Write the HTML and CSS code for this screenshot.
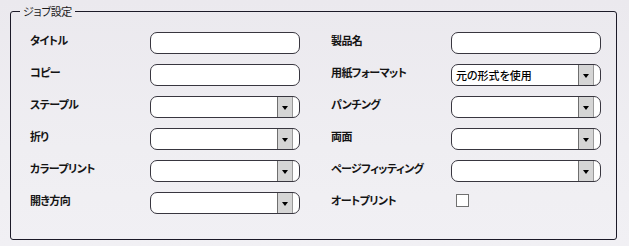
FILE: index.html
```html
<!DOCTYPE html>
<html lang="ja">
<head>
<meta charset="utf-8">
<title>ジョブ設定</title>
<link rel="stylesheet" href="styles.css">
</head>
<body>
<div class="page">
  <fieldset class="group">
    <legend class="group-title">ジョブ設定</legend>
    <div class="grid">
      <div class="field"><span class="label">タイトル</span><div class="input"></div></div>
      <div class="field"><span class="label">製品名</span><div class="input"></div></div>

      <div class="field"><span class="label">コピー</span><div class="input"></div></div>
      <div class="field"><span class="label">用紙フォーマット</span><div class="input select"><span class="value">元の形式を使用</span><span class="drop"><span class="arrow"></span></span></div></div>

      <div class="field"><span class="label">ステープル</span><div class="input select"><span class="value"></span><span class="drop"><span class="arrow"></span></span></div></div>
      <div class="field"><span class="label">パンチング</span><div class="input select"><span class="value"></span><span class="drop"><span class="arrow"></span></span></div></div>

      <div class="field"><span class="label">折り</span><div class="input select"><span class="value"></span><span class="drop"><span class="arrow"></span></span></div></div>
      <div class="field"><span class="label">両面</span><div class="input select"><span class="value"></span><span class="drop"><span class="arrow"></span></span></div></div>

      <div class="field"><span class="label">カラープリント</span><div class="input select"><span class="value"></span><span class="drop"><span class="arrow"></span></span></div></div>
      <div class="field"><span class="label">ページフィッティング</span><div class="input select"><span class="value"></span><span class="drop"><span class="arrow"></span></span></div></div>

      <div class="field"><span class="label">開き方向</span><div class="input select"><span class="value"></span><span class="drop"><span class="arrow"></span></span></div></div>
      <div class="field"><span class="label">オートプリント</span><div class="check-wrap"><span class="checkbox"></span></div></div>
    </div>
  </fieldset>
</div>
</body>
</html>
```

FILE: styles.css
```css
html, body {
  margin: 0;
  padding: 0;
}
body {
  width: 629px;
  height: 246px;
  background: linear-gradient(180deg, #ebe9ee 0%, #efeef2 60%, #f1f0f4 100%);
  font-family: "Noto Sans CJK JP", "Noto Sans", sans-serif;
  font-feature-settings: "palt";
  color: #141414;
  overflow: hidden;
}
.page {
  padding: 5px 0 0 10px;
}
.group {
  box-sizing: border-box;
  width: 607px;
  height: 235px;
  margin: 0;
  padding: 0;
  border: 1px solid #1c1a28;
  border-radius: 3px;
  min-width: 0;
}
.group-title {
  margin-left: 9px;
  padding: 0 3px;
  font-size: 11px;
  line-height: 13px;
  height: 13px;
  color: #1a1a1a;
  letter-spacing: -0.3px;
}
.grid {
  display: grid;
  grid-template-columns: 270px 270px;
  column-gap: 31px;
  row-gap: 10px;
  padding: 14px 0 0 19px;
}
.field {
  display: flex;
  align-items: flex-start;
  height: 22px;
}
.label {
  width: 120px;
  flex: none;
  font-size: 11px;
  line-height: 13px;
  font-weight: 700;
  letter-spacing: -0.6px;
  padding-top: 2px;
  white-space: nowrap;
}
.input {
  box-sizing: border-box;
  width: 150px;
  height: 22px;
  background: #fff;
  border: 1px solid #38363f;
  border-radius: 7px;
  display: flex;
  align-items: stretch;
}
.select .value {
  flex: 1;
  font-size: 11px;
  line-height: 20px;
  padding-left: 4px;
  color: #000;
  font-weight: 500;
}
.drop {
  box-sizing: border-box;
  width: 16px;
  margin-right: 6px;
  background: #d5d5d5;
  border-left: 1px solid #6e6e6e;
  border-right: 1px solid #9a9a9a;
  display: flex;
  align-items: center;
  justify-content: center;
}
.arrow {
  width: 0;
  height: 0;
  border-left: 3px solid transparent;
  border-right: 3px solid transparent;
  border-top: 4px solid #000;
  margin-top: 1px;
}
.check-wrap {
  padding: 2px 0 0 5px;
}
.checkbox {
  display: block;
  box-sizing: border-box;
  width: 13px;
  height: 13px;
  background: #fff;
  border: 1px solid #707070;
}
```
